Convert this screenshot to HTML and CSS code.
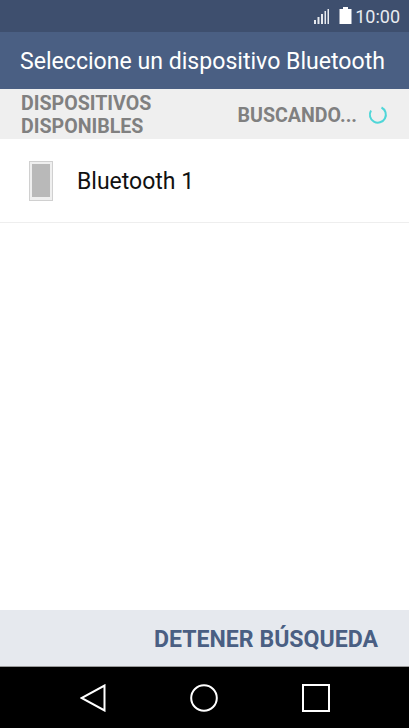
FILE: index.html
```html
<!DOCTYPE html>
<html lang="en">
<head>
  <meta charset="UTF-8" />
  <meta name="viewport" content="width=device-width, initial-scale=1.0" />
  <title>Bluetooth</title>
  <link rel="stylesheet" href="styles.css">
</head>
<body>

<div class="phone">
  <!-- Status bar -->
  <div class="status-bar">
    <svg class="signal" width="16" height="17" viewBox="0 0 16 17">
      <rect x="0" y="12" width="2" height="4" />
      <rect x="3.5" y="9" width="2" height="7" />
      <rect x="7" y="6" width="2" height="10" />
      <rect x="10.5" y="3" width="1.5" height="13" />
      <rect x="13.5" y="1" width="1.5" height="15" />
    </svg>
    <svg class="battery" width="13" height="18" viewBox="0 0 13 18">
      <path d="M4 0h5v2h3.500v15H.5V2H4z" />
    </svg>
    <span class="clock">10:00</span>
  </div>

  <div class="title-bar">Seleccione un dispositivo Bluetooth</div>

  <div class="section-header">
    <div class="section-title">DISPOSITIVOS<br>DISPONIBLES</div>
    <div class="section-status">
      <span>BUSCANDO...</span>
      <svg class="spinner" width="20" height="20" viewBox="0 0 20 20">
        <path d="M13.500 2.500A8 8 0 1 1 3 5.500" />
      </svg>
    </div>
  </div>

  <div class="device-list">
    <div class="device-row">
      <div class="device-icon"><div class="device-screen"></div></div>
      <div class="device-name">Bluetooth 1</div>
    </div>
  </div>

  <div class="action-bar">
    <span class="action-button">DETENER BÚSQUEDA</span>
  </div>

  <!-- Nav bar -->
  <div class="nav-bar">
    <svg width="26" height="28" viewBox="0 0 26 28"><path d="M24.500 1.500V26.500L1.500 14Z" /></svg>
    <svg width="28" height="28" viewBox="0 0 28 28"><circle cx="14" cy="14" r="12.800" /></svg>
    <svg width="28" height="28" viewBox="0 0 28 28"><rect x="1" y="1" width="26" height="26" /></svg>
  </div>
</div>

</body>
</html>
```

FILE: styles.css
```css
html, body {
  margin: 0;
  padding: 0;
  height: 100%;
  font-family: Roboto, sans-serif;
  background-color: #ffffff;
}

.phone {
  display: flex;
  flex-direction: column;
  height: 728px;
  width: 409px;
  overflow: hidden;
}

.status-bar {
  height: 32px;
  background-color: #3e4f6e;
  color: #ffffff;
  display: flex;
  align-items: center;
  justify-content: flex-end;
  padding-right: 9px;
  box-sizing: border-box;
}

.signal {
  fill: #e6e9ee;
  margin-right: 9px;
}

.battery {
  fill: #ffffff;
  margin-right: 3px;
}

.clock {
  font-size: 18px;
  color: #e8ebf0;
}

.title-bar {
  height: 56px;
  padding-top: 1px;
  background-color: #4a5f83;
  color: #ffffff;
  font-size: 23.1px;
  line-height: 57px;
  padding-left: 20px;
  white-space: nowrap;
}

.section-header {
  height: 50px;
  box-sizing: border-box;
  background-color: #efefef;
  color: #808080;
  font-weight: 700;
  font-size: 19.6px;
  line-height: 23px;
  display: flex;
  align-items: center;
  justify-content: space-between;
  padding: 2px 21px 0 21px;
}

.section-status {
  display: flex;
  align-items: center;
  gap: 11px;
}

.spinner {
  fill: none;
  stroke: #4fd6d8;
  stroke-width: 2;
}

.device-list {
  flex: 1;
  background-color: #ffffff;
}

.device-row {
  height: 82px;
  padding-top: 1px;
  display: flex;
  align-items: center;
  border-bottom: 1px solid #eeeeee;
}

.device-icon {
  width: 24px;
  height: 40px;
  margin-left: 29px;
  box-sizing: border-box;
  border: 1px solid #d0d0d0;
  background-color: #efefef;
  padding: 2px 2px 3px;
}

.device-screen {
  height: 100%;
  background-color: #b9b9b9;
}

.device-name {
  margin-left: 24px;
  padding-top: 1px;
  font-size: 23px;
  color: #111111;
}

.action-bar {
  height: 57px;
  background-color: #e6e9ee;
  border-bottom: 1px solid #9a9a9a;
  display: flex;
  align-items: center;
  justify-content: flex-end;
  padding: 2px 31px 0 0;
  box-sizing: border-box;
}

.action-button {
  color: #4a5f83;
  font-weight: 700;
  font-size: 23.1px;
}

.nav-bar {
  height: 61px;
  background-color: #000000;
  display: flex;
  align-items: center;
  justify-content: center;
  gap: 84px;
}

.nav-bar svg {
  fill: none;
  stroke: #ffffff;
  stroke-width: 2;
}
```
